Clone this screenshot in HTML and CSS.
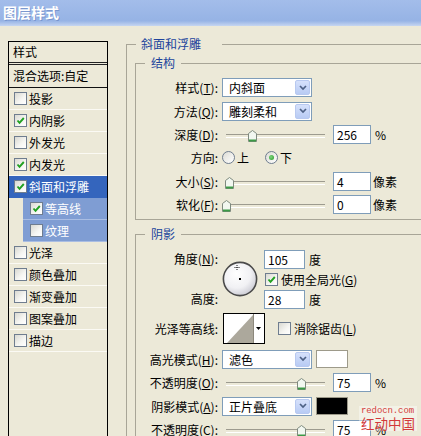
FILE: index.html
```html
<!DOCTYPE html>
<html lang="zh-CN">
<head>
<meta charset="utf-8">
<title>图层样式</title>
<link rel="stylesheet" href="styles.css">
</head>
<body>
<div class="titlebar">图层样式</div>
<div class="main">
  <div class="stylelist">
    <div class="head">样式</div>
    <div class="blend">混合选项:自定</div>
    <div class="item"><span class="cb"></span>投影</div>
    <div class="item"><span class="cb"><svg viewBox="0 0 11 11"><path d="M2.5 5.5 L4.5 7.8 L8.8 3" /></svg></span>内阴影</div>
    <div class="item"><span class="cb"></span>外发光</div>
    <div class="item"><span class="cb"><svg viewBox="0 0 11 11"><path d="M2.5 5.5 L4.5 7.8 L8.8 3" /></svg></span>内发光</div>
    <div class="item sel"><span class="cb"><svg viewBox="0 0 11 11"><path d="M2.5 5.5 L4.5 7.8 L8.8 3" /></svg></span>斜面和浮雕</div>
    <div class="item sub"><span class="cb"><svg viewBox="0 0 11 11"><path d="M2.5 5.5 L4.5 7.8 L8.8 3" /></svg></span>等高线</div>
    <div class="item sub"><span class="cb"></span>纹理</div>
    <div class="item"><span class="cb"></span>光泽</div>
    <div class="item"><span class="cb"></span>颜色叠加</div>
    <div class="item"><span class="cb"></span>渐变叠加</div>
    <div class="item"><span class="cb"></span>图案叠加</div>
    <div class="item"><span class="cb"></span>描边</div>
  </div>

  <div class="panel">
    <fieldset class="outer">
      <legend>斜面和浮雕</legend>

      <fieldset class="group struct">
        <legend>结构</legend>
        <div class="form">
          <div class="lbl">样式(<u>T</u>):</div>
          <div class="ctl"><div class="select"><span>内斜面</span><span class="dd"><svg viewBox="0 0 8 6"><path d="M1 1 L4 4 L7 1"/></svg></span></div></div>

          <div class="lbl">方法(<u>Q</u>):</div>
          <div class="ctl"><div class="select"><span>雕刻柔和</span><span class="dd"><svg viewBox="0 0 8 6"><path d="M1 1 L4 4 L7 1"/></svg></span></div></div>

          <div class="lbl">深度(<u>D</u>):</div>
          <div class="ctl">
            <div class="slider"><span class="thumb" style="left:26px"><svg viewBox="0 0 9 12"><path class="tb" d="M0.5 3.5 L4.5 0.5 L8.5 3.5 L8.5 11.5 L0.5 11.5 Z"/><path class="tg" d="M1 10.5 H8"/></svg></span></div>
            <span class="num">256</span><span class="unit">%</span>
          </div>

          <div class="lbl">方向:</div>
          <div class="ctl">
            <span class="radio"></span><span class="rtext">上</span>
            <span class="radio on second"></span><span class="rtext">下</span>
          </div>

          <div class="lbl">大小(<u>S</u>):</div>
          <div class="ctl">
            <div class="slider"><span class="thumb" style="left:3px"><svg viewBox="0 0 9 12"><path class="tb" d="M0.5 3.5 L4.5 0.5 L8.5 3.5 L8.5 11.5 L0.5 11.5 Z"/><path class="tg" d="M1 10.5 H8"/></svg></span></div>
            <span class="num">4</span><span class="unit px">像素</span>
          </div>

          <div class="lbl">软化(<u>F</u>):</div>
          <div class="ctl">
            <div class="slider"><span class="thumb" style="left:0px"><svg viewBox="0 0 9 12"><path class="tb" d="M0.5 3.5 L4.5 0.5 L8.5 3.5 L8.5 11.5 L0.5 11.5 Z"/><path class="tg" d="M1 10.5 H8"/></svg></span></div>
            <span class="num">0</span><span class="unit px">像素</span>
          </div>
        </div>
      </fieldset>

      <fieldset class="group shadow">
        <legend>阴影</legend>
        <div class="form sform">
          <div class="lbl two"><span>角度(<u>N</u>):</span><span>高度:</span></div>
          <div class="ctl angle">
            <svg class="dial" viewBox="0 0 36 36">
              <defs><radialGradient id="dg" cx="40%" cy="35%" r="70%"><stop offset="0" stop-color="#ffffff"/><stop offset="0.6" stop-color="#f1f1f4"/><stop offset="1" stop-color="#c9c9d2"/></radialGradient></defs>
              <circle cx="18" cy="18" r="16.6" fill="url(#dg)" stroke="#4a4a4a" stroke-width="1.6"/>
              <rect x="17" y="17" width="2" height="2" fill="#000"/>
              <path d="M15 4 V9 M12.5 6.5 H17.5" stroke="#000" stroke-width="0.9" stroke-dasharray="1 1"/>
            </svg>
            <div class="stack">
              <div class="srow"><span class="num wide">105</span><span class="unit">度</span></div>
              <div class="srow"><span class="cb"><svg viewBox="0 0 11 11"><path d="M2.5 5.5 L4.5 7.8 L8.8 3" /></svg></span><span class="cbtext">使用全局光(<u>G</u>)</span></div>
              <div class="srow"><span class="num wide">28</span><span class="unit">度</span></div>
            </div>
          </div>

          <div class="lbl">光泽等高线:</div>
          <div class="ctl">
            <svg class="contour" viewBox="0 0 42 31">
              <rect x="0.5" y="0.5" width="41" height="30" fill="#fff" stroke="#000"/>
              <polygon points="4,30 30,2 30,30" fill="#aca89c"/>
              <line x1="30.5" y1="1" x2="30.5" y2="30" stroke="#8c887c"/>
              <polygon points="33,14 38,14 35.5,17" fill="#000"/>
            </svg>
            <span class="cb gap"></span><span class="cbtext">消除锯齿(<u>L</u>)</span>
          </div>

          <div class="lbl">高光模式(<u>H</u>):</div>
          <div class="ctl"><div class="select"><span>滤色</span><span class="dd"><svg viewBox="0 0 8 6"><path d="M1 1 L4 4 L7 1"/></svg></span></div><span class="swatch white"></span></div>

          <div class="lbl">不透明度(<u>O</u>):</div>
          <div class="ctl">
            <div class="slider"><span class="thumb" style="left:75px"><svg viewBox="0 0 9 12"><path class="tb" d="M0.5 3.5 L4.5 0.5 L8.5 3.5 L8.5 11.5 L0.5 11.5 Z"/><path class="tg" d="M1 10.5 H8"/></svg></span></div>
            <span class="num">75</span><span class="unit">%</span>
          </div>

          <div class="lbl">阴影模式(<u>A</u>):</div>
          <div class="ctl"><div class="select"><span>正片叠底</span><span class="dd"><svg viewBox="0 0 8 6"><path d="M1 1 L4 4 L7 1"/></svg></span></div><span class="swatch black"></span></div>

          <div class="lbl">不透明度(<u>C</u>):</div>
          <div class="ctl">
            <div class="slider"><span class="thumb" style="left:75px"><svg viewBox="0 0 9 12"><path class="tb" d="M0.5 3.5 L4.5 0.5 L8.5 3.5 L8.5 11.5 L0.5 11.5 Z"/><path class="tg" d="M1 10.5 H8"/></svg></span></div>
            <span class="num">75</span><span class="unit">%</span>
          </div>
        </div>
      </fieldset>
    </fieldset>
  </div>
</div>
<div class="watermark"><div class="wm-url">redocn.com</div><div class="wm-name">红动中国</div></div>
</body>
</html>
```

FILE: styles.css
```css
* { box-sizing: border-box; }
html, body { margin: 0; padding: 0; }
body {
  width: 421px;
  height: 436px;
  overflow: hidden;
  position: relative;
  background: #ECE9D8;
  font-family: "Noto Sans CJK SC", "Liberation Sans", sans-serif;
  font-size: 12px;
  color: #000;
}
u { text-decoration: underline; text-underline-offset: 1px; }

.titlebar {
  height: 26px;
  padding-left: 3px;
  line-height: 25px;
  color: #fff;
  font-weight: bold;
  font-size: 14px;
  text-shadow: 1px 1px 0 rgba(60, 90, 160, 0.35);
  background: linear-gradient(#a3bdea, #96b3e5 80%, #c6d6f1);
}

.main { display: flex; width: 460px; }

/* left list */
.stylelist {
  width: 100px;
  height: 420px;
  margin: 15px 0 0 8px;
  border: 1px solid #000;
  border-bottom: none;
}
.head {
  height: 23px;
  line-height: 20px;
  padding-left: 4px;
  border-bottom: 3px double #222;
}
.blend {
  height: 23px;
  line-height: 22px;
  padding-left: 4px;
  border-bottom: 1px solid #111;
}
.item {
  height: 22px;
  display: flex;
  align-items: center;
  padding-left: 5px;
  border-bottom: 1px solid #fbfaf4;
}
.item.sel { background: #3465bd; color: #fff; border-bottom-color: #3465bd; }
.item.sub {
  margin-left: 14px;
  padding-left: 7px;
  background: #7f9dd3;
  color: #fff;
  border-bottom-color: #a9bde3;
}
.cb {
  width: 13px;
  height: 13px;
  flex: none;
  margin-right: 2px;
  border: 1px solid #6f7d8f;
  background: linear-gradient(135deg, #d9d9d2, #f6f6f3 60%, #ffffff);
  display: inline-flex;
  align-items: center;
  justify-content: center;
}
.cb svg { width: 11px; height: 11px; }
.cb svg path { fill: none; stroke: #21a121; stroke-width: 1.9; }

/* right panel */
.panel { margin: 11px 0 0 18px; width: 330px; }
fieldset { margin: 0; min-width: 0; border: 1px solid #a8a597; }
legend {
  font-size: 12px;
  line-height: 14px;
  color: #21449c;
}
.outer { padding: 5px 0 0 8px; border-right: none; }
.outer > legend { margin-left: 1px; padding: 0 21px 0 5px; }
.group > legend { margin-left: 9px; padding: 0 6px; }
.struct { padding: 6px 0 3px 0; }
.shadow { padding: 8px 0 0 0; margin-top: 7px; }

.form {
  display: grid;
  grid-template-columns: 82px 1fr;
  column-gap: 4px;
  grid-auto-rows: 23.4px;
  align-items: center;
}
.sform { grid-template-rows: 60px 38px 23.5px 23.5px 23.5px 23.5px; }
.lbl { text-align: right; white-space: nowrap; }
.lbl.two {
  height: 60px;
  display: flex;
  flex-direction: column;
  justify-content: space-between;
  line-height: 20px;
}
.ctl { display: flex; align-items: center; white-space: nowrap; }

.select {
  width: 90px;
  height: 19px;
  border: 1px solid #7f9db9;
  background: #fff;
  display: flex;
  align-items: center;
  justify-content: space-between;
  padding: 0 1px 0 6px;
}
.dd {
  width: 15px;
  height: 15px;
  border: 1px solid #b8c9f0;
  border-radius: 2px;
  background: linear-gradient(#d6e1fb, #b8cbf4);
  display: flex;
  align-items: center;
  justify-content: center;
}
.dd svg { width: 8px; height: 6px; }
.dd svg path { fill: none; stroke: #4d6185; stroke-width: 1.7; }

.slider {
  position: relative;
  width: 103px;
  height: 13px;
  flex: none;
}
.slider::before {
  content: "";
  position: absolute;
  left: 4px;
  right: 0;
  top: 6px;
  height: 2px;
  border-top: 1px solid #9d9b8f;
  border-bottom: 1px solid #fff;
}
.thumb { position: absolute; top: 2px; width: 9px; height: 12px; }
.thumb svg { display: block; width: 9px; height: 12px; }
.tb { fill: #f2f7f0; stroke: #7f8a7f; stroke-width: 1; }
.tg { stroke: #3c9a46; stroke-width: 2; }

.num {
  width: 38px;
  height: 19px;
  margin-left: 8px;
  border: 1px solid #7f9db9;
  background: #fff;
  padding-left: 3px;
  line-height: 17px;
}
.num.wide { width: 41px; margin-left: 0; }
.unit { margin-left: 4px; }
.unit.px { margin-left: 2px; }

.radio {
  width: 13px;
  height: 13px;
  border-radius: 50%;
  border: 1px solid #6f7d8f;
  background: linear-gradient(135deg, #dcdcd5, #ffffff);
  display: inline-flex;
  align-items: center;
  justify-content: center;
}
.radio.on::after {
  content: "";
  width: 5px;
  height: 5px;
  border-radius: 50%;
  background: radial-gradient(circle at 40% 40%, #7fd47f, #239a23);
}
.radio.second { margin-left: 16px; }
.rtext { margin-left: 2px; }

.angle { height: 60px; }
.dial { width: 36px; height: 36px; flex: none; }
.stack { margin-left: 6px; display: flex; flex-direction: column; }
.srow { height: 20px; display: flex; align-items: center; }
.srow .cb { margin-left: 1px; }
.cbtext { margin-left: 1px; }

.contour { width: 42px; height: 31px; margin-left: 1px; flex: none; }
.cb.gap { margin-left: 13px; }

.swatch { width: 32px; height: 18px; margin-left: 4px; border: 1px solid #9d9a8a; }
.swatch.white { background: #fff; }
.swatch.black { background: #000; }

.watermark {
  position: absolute;
  left: 359px;
  top: 406px;
  padding: 1px 2px 0;
  background: rgba(255, 255, 255, 0.4);
  color: #d33a3a;
  line-height: 1;
}
.wm-url { font-family: "Liberation Mono", monospace; font-size: 9px; letter-spacing: -0.1px; }
.wm-name { font-size: 13.5px; margin-top: 1px; }
```
